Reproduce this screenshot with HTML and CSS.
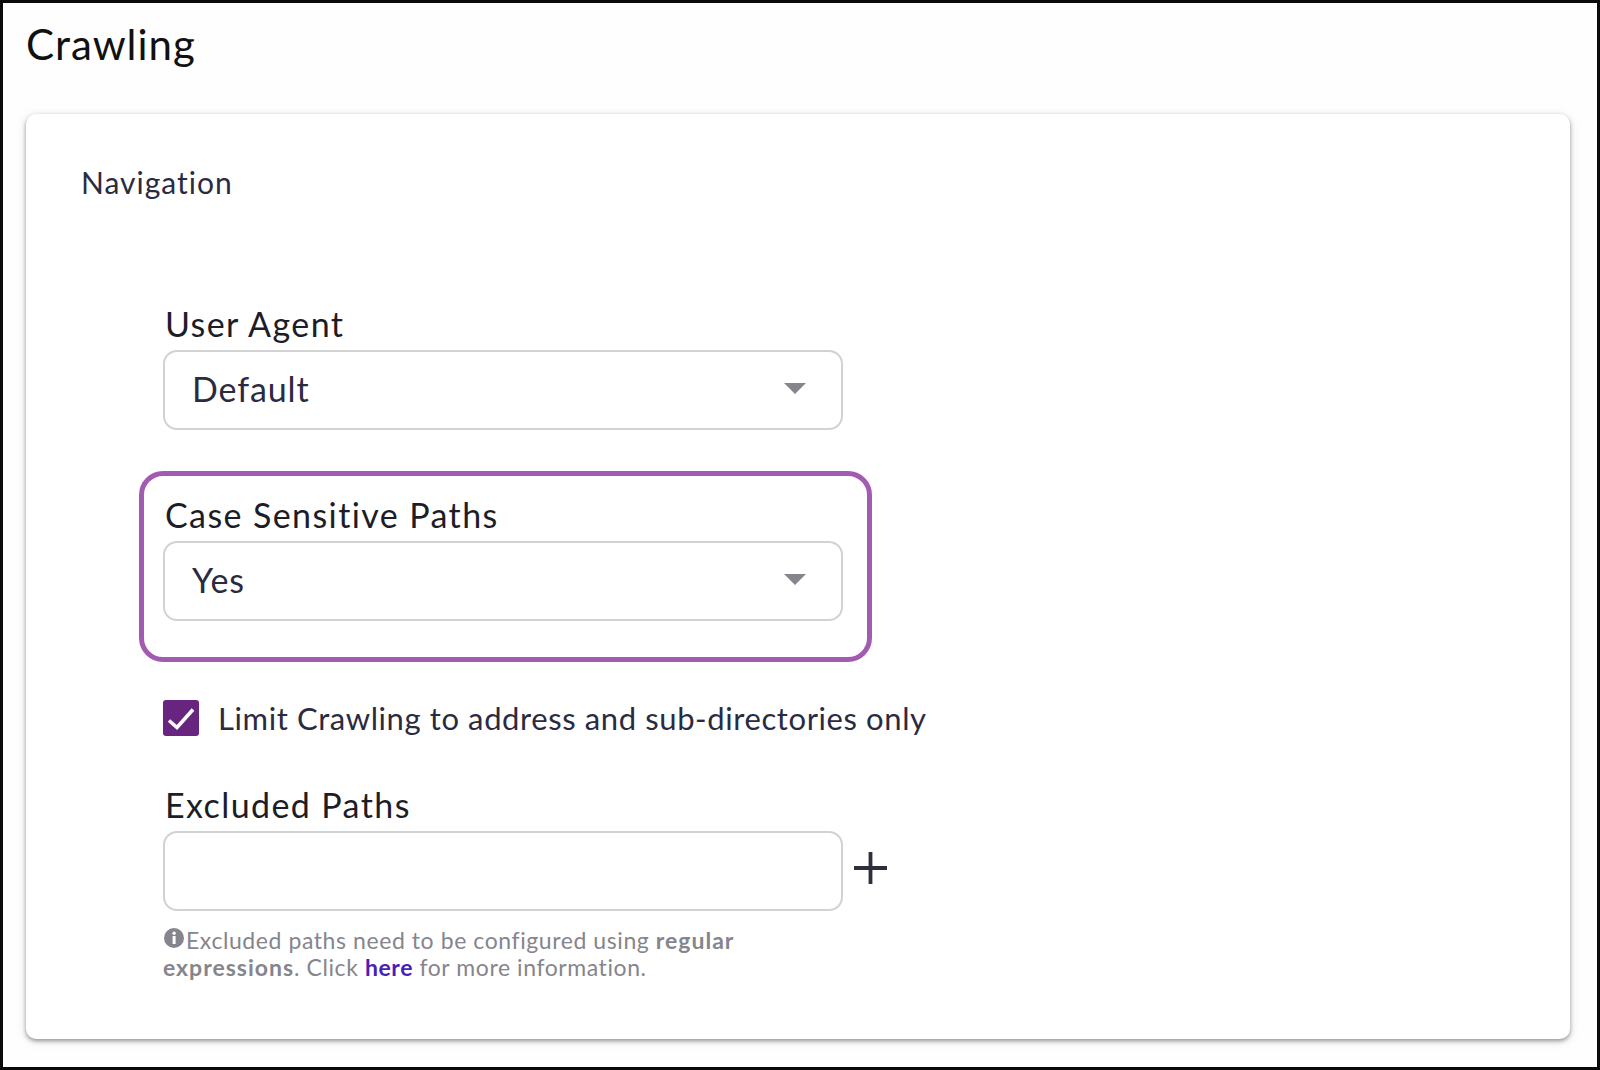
FILE: index.html
```html
<!DOCTYPE html>
<html lang="en">
<head>
<meta charset="utf-8">
<title>Crawling</title>
<link rel="stylesheet" href="styles.css">
</head>
<body>
<main class="frame">
  <h1 class="title">Crawling</h1>
  <section class="card">
    <h2 class="section-title">Navigation</h2>
    <div class="form">
      <div class="field">
        <div class="label">User Agent</div>
        <div class="select"><span>Default</span><i class="caret"></i></div>
      </div>
      <div class="highlight">
        <div class="label">Case Sensitive Paths</div>
        <div class="select"><span>Yes</span><i class="caret"></i></div>
      </div>
      <div class="check-row">
        <span class="checkbox">
          <svg viewBox="0 0 36 36" width="36" height="36"><path d="M6 20.5 L14 27.5 L30 9.5" fill="none" stroke="#fff" stroke-width="3.6"/></svg>
        </span>
        <span class="check-label">Limit Crawling to address and sub-directories only</span>
      </div>
      <div class="field excluded">
        <div class="label">Excluded Paths</div>
        <div class="input-row">
          <div class="select"></div>
          <svg class="plus" viewBox="0 0 33 32" width="33" height="32"><path d="M16.5 0V32M0 16H33" stroke="#2e2e3f" stroke-width="3.8" fill="none"/></svg>
        </div>
        <p class="help"><svg class="info" viewBox="0 0 20 20" width="20" height="20"><circle cx="10" cy="10" r="10" fill="#85858d"/><rect x="8.6" y="8" width="3" height="8" fill="#fff"/><circle cx="10.1" cy="5.2" r="1.7" fill="#fff"/></svg>Excluded paths need to be configured using <b>regular expressions</b>. Click <a href="#">here</a> for more information.</p>
      </div>
    </div>
  </section>
</main>
</body>
</html>
```
FILE: styles.css
```css
* { box-sizing: border-box; }
html, body { margin: 0; padding: 0; }
body { background: #fff; font-family: Lato, "Open Sans", sans-serif; color: #20202e; }
.frame { width: 1600px; height: 1070px; border: 3px solid #0a0a0a; background: #fefefe; padding: 0 27px 0 23px; overflow: hidden; }
.title { margin: 0; height: 111px; padding: 15px 0 0 0; font-size: 42px; line-height: 52px; font-weight: 400; color: #111; letter-spacing: 1px; }
.card { height: 925px; background: #fff; border-radius: 10px; box-shadow: 0 2px 4px rgba(0,0,0,.38), 0 2px 12px rgba(0,0,0,.1); padding: 48px 55px 0; }
.section-title { margin: 0; font-size: 30px; line-height: 40px; font-weight: 400; color: #2b2b3f; letter-spacing: 1px; }
.form { margin: 0 0 0 82px; width: 680px; padding-top: 99px; }
.label { padding-left: 2px; font-size: 34px; line-height: 46px; height: 49px; color: #1d1d28; letter-spacing: 1.4px; }
.select { width: 680px; height: 80px; border: 2px solid #d2d2d2; border-radius: 14px; background: #fff; display: flex; align-items: center; justify-content: space-between; padding: 0 35px 3px 27px; font-size: 34px; color: #2b2b3f; letter-spacing: .9px; }
.caret { width: 0; height: 0; border-left: 11px solid transparent; border-right: 11px solid transparent; border-top: 11px solid #85858d; }
.highlight { margin: 41px 0 0 -24px; padding: 16px 24px 36px 19px; border: 5px solid #a25bb0; border-radius: 24px; width: 733px; }
.check-row { display: flex; align-items: center; gap: 19px; margin-top: 38px; white-space: nowrap; }
.checkbox { width: 36px; height: 36px; border-radius: 3px; background: #68257f; flex: none; display: block; }
.checkbox svg { display: block; }
.check-label { font-size: 31px; line-height: 36px; color: #2b2b3f; letter-spacing: .6px; }
.excluded { margin-top: 46px; }
.input-row { display: flex; align-items: center; gap: 11px; width: 760px; }
.input-row .select { flex: none; }
.plus { flex: none; margin-top: -6px; }
.help { margin: 16px 0 0; width: 600px; font-size: 23px; line-height: 27px; color: #85858d; letter-spacing: .58px; }
.help b { font-weight: 700; letter-spacing: 1px; }
.help a { color: #4a1fb8; font-weight: 700; text-decoration: none; }
.info { vertical-align: 1px; margin: 0 2px 0 1px; }
```
